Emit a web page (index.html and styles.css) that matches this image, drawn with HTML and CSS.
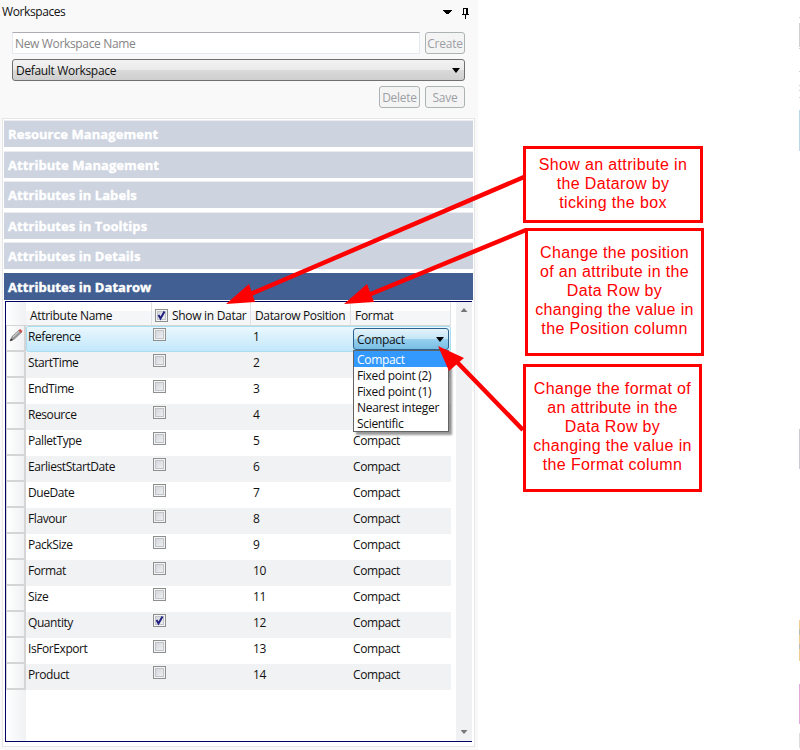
FILE: index.html
```html
<!DOCTYPE html>
<html lang="en">
<head>
<meta charset="utf-8">
<title>Workspaces</title>
<link rel="stylesheet" href="styles.css">
</head>
<body>
<main class="page">
  <section class="panel">
    <header class="titlebar">
      <span class="title">Workspaces</span>
      <svg class="title-icons" width="25" height="12" viewBox="0 0 25 12"><path d="M0 2h9v1H8v1H7v1H6v1H3V5H2V4H1V3H0z" fill="#000"/><path d="M20 0h5v6h1v1h-3v4h-1V7h-3V6h1zM21 1v5h2V1z" fill="#000" fill-rule="evenodd"/></svg>
    </header>
    <div class="form">
      <div class="line"><div class="input">New Workspace Name</div><div class="button">Create</div></div>
      <div class="select"><span>Default Workspace</span><i class="caret"></i></div>
      <div class="line actions"><div class="button delete">Delete</div><div class="button">Save</div></div>
    </div>
    <div class="accordion">
      <div class="bar b1"><span>Resource Management</span></div>
      <div class="bar b2"><span>Attribute Management</span></div>
      <div class="bar b3"><span>Attributes in Labels</span></div>
      <div class="bar b4"><span>Attributes in Tooltips</span></div>
      <div class="bar b5"><span>Attributes in Details</span></div>
      <div class="bar active"><span>Attributes in Datarow</span></div>
      <div class="datagrid">
        <div class="rows" id="rows">
          <div class="row head"><div class="rh"></div><div class="hc c-name">Attribute Name</div><div class="hc c-show"><i class="check on"></i><span>Show in Datar</span></div><div class="hc c-pos">Datarow Position</div><div class="hc c-format">Format</div></div>
        </div>
        <div class="scroll"><i class="up"></i><i class="down"></i></div>
      </div>
    </div>
  </section>
  <aside class="notes">
    <div class="note n1">Show an attribute in<br>the Datarow by<br>ticking the box</div>
    <div class="note n2">Change the position<br>of an attribute in the<br>Data Row by<br>changing the value in<br>the Position column</div>
    <div class="note n3">Change the format of<br>an attribute in the<br>Data Row by<br>changing the value in<br>the Format column</div>
  </aside>
  <div class="menu">
    <div class="opt sel">Compact</div><div class="opt">Fixed point (2)</div><div class="opt">Fixed point (1)</div><div class="opt">Nearest integer</div><div class="opt">Scientific</div>
  </div>
  <svg class="arrows" width="800" height="750" viewBox="0 0 800 750">
    <g stroke="#f00" stroke-width="4.5" fill="none"><path d="M524 177L246 296M526 230L366 296M523 430L456 361"/></g>
    <path d="M226 304L249 284L255 302ZM344 304L367 284L374 302ZM438 346L464 358L449 371Z" fill="#f00"/>
  </svg>
  <svg class="edge" width="1" height="750" viewBox="0 0 1 750"><path d="M0 17h1v1H0zM0 23h1v24H0zM0 48h1v1H0zM0 71h1v1H0zM0 85h1v1H0zM0 90h1v1H0zM0 97h1v1H0z" fill="#d0d0d0"/><path d="M0 110h1v41H0z" fill="#b9d9e6"/><path d="M0 429h1v40H0z" fill="#cbcbd6"/><path d="M0 620h1v41H0z" fill="#f2cf91"/><path d="M0 629h1v6H0zM0 644h1v5H0z" fill="#bbb"/><path d="M0 684h1v40H0z" fill="#e4a5dc"/><path d="M0 733h1v15H0z" fill="#ddd"/></svg>
</main>
<script src="grid.js"></script>
</body>
</html>
```
FILE: styles.css
```css
* { box-sizing: border-box; }
body { margin: 0; background: #fff; color: #111; font: 12px/16px "Open Sans", "Noto Sans", sans-serif; }
.page { position: relative; display: flex; width: 800px; height: 750px; overflow: hidden; }
i { display: block; flex: none; }

.panel { width: 478px; height: 750px; flex: none; background: #f9f9f9; }
.titlebar { display: flex; justify-content: space-between; height: 32px; padding: 4px 9px 0 2px; }
.title { letter-spacing: -.4px; }
.title-icons { margin-top: 4px; overflow: visible; margin-right: 1px; }
.form { display: flex; flex-direction: column; gap: 5px; height: 86px; padding: 0 13px 0 12px; }
.line { display: flex; gap: 5px; height: 22px; }
.actions { justify-content: flex-end; }
.input { width: 408px; height: 22px; padding: 3px 2px; background: #fff; border: 1px solid #e3e9ef; border-top-color: #abadb3; color: #858585; letter-spacing: -.34px; }
.button { width: 40px; height: 22px; padding-top: 3px; border: 1px solid #adb2b5; border-radius: 3px; background: #f4f4f4; color: #9c9fa4; text-align: center; white-space: nowrap; letter-spacing: -.25px; }
.delete { width: 41px; }
.select { display: flex; align-items: center; justify-content: space-between; height: 22px; flex: none; padding: 1px 4px 0 3px; border: 1px solid #707070; border-radius: 3px; background: linear-gradient(#f2f2f2, #ebebeb 48%, #dadada 50%, #cfcfcf); letter-spacing: -.33px; }
.caret { width: 8px; height: 5px; background: #000; clip-path: polygon(0 0, 100% 0, 50% 100%); }

.accordion { margin-left: 2px; width: 473px; height: 629px; padding: 1px; border: 1px solid #e6e6e6; background: #fff; }
.bar { width: 469px; height: 27px; margin: 0 0 4px; padding: 4px 4px 0; border-top: 1px solid #ececf0; background: #cdd3df; color: #fff; font-size: 13px; line-height: 18px; font-weight: 700; letter-spacing: .06px; -webkit-text-stroke: .4px #fff; }
.bar.b2, .bar.b4 { margin-bottom: 3px; }
.bar span { display: inline-block; white-space: nowrap; }
.bar.active { margin-bottom: 1px; background: #415f92; border-color: #415f92; }

.datagrid { display: flex; justify-content: space-between; width: 467px; height: 441px; margin-left: 1px; border: solid #000066; border-width: 1px 0 1px 1px; background: linear-gradient(90deg, #fff, #eff1f3 20px, #fff 20px); }
.rows { width: 445px; }
.row { display: flex; height: 26px; }
.row.head { height: 24px; }
.rh { width: 20px; flex: none; border: 1px solid #d5d5d5; border-width: 0 2px 2px 1px; background: linear-gradient(90deg, #fff, #eff1f3); }
.head .rh { border: 0; border-bottom: 1px solid #d5d5d5; }
.row:not(.head) { background: #fff; }
.row.alt { background: #f1f2f4; }
.row.current .cells { background: linear-gradient(#eaf7fe, #c2e8fb); border: 1px solid #a9ddf0; border-radius: 2px; }
.hc { display: flex; align-items: center; flex: none; height: 24px; padding: 5px 0 0 4px; overflow: hidden; white-space: nowrap; border-right: 1px solid #dfe1e4; border-bottom: 1px solid #d5d5d5; background: linear-gradient(#fff 38%, #f5f6f7 39%); letter-spacing: -.3px; }
.hc.c-name { width: 126px; }
.hc.c-show { width: 99px; padding: 3px 3px 0 3px; gap: 4px; letter-spacing: -.3px; }
.hc.c-show span { padding-top: 2px; }
.hc.c-pos { width: 100px; letter-spacing: -.36px; }
.hc.c-format { width: 100px; }
.cells { display: grid; grid-template-columns: 126px 99px 100px 100px; width: 425px; height: 26px; letter-spacing: -.42px; }
.cells > * { padding: 3px 0 0 2px; white-space: nowrap; }
.cells .mark { padding: 2px 0 0 1px; }
.current .cells > * { margin-left: -1px; margin-top: -1px; }
.check { width: 13px; height: 13px; border: 1px solid #8e8f8f; background: linear-gradient(135deg, #cbcfd5, #f6f6f6); box-shadow: inset 0 0 0 1px #f4f4f4, inset 0 0 0 2px #c0c4c9; }
.check svg { display: block; }
.pencil { display: block; margin: 2px 0 0 2px; }
.scroll { display: flex; flex-direction: column; justify-content: space-between; align-items: center; width: 16px; padding: 6px 0 7px; background: #f0f1f3; }
.up, .down { width: 7px; height: 4px; background: #777; }
.up { clip-path: polygon(50% 0, 100% 100%, 0 100%); }
.down { clip-path: polygon(0 0, 100% 0, 50% 100%); }
.current .cells .combo { display: flex; align-items: center; justify-content: space-between; width: 96px; height: 22px; margin: 1px 0 0 1px; padding: 1px 4px 0 3px; border: 1px solid #2c628b; border-radius: 3px; background: linear-gradient(#e5f4fc, #c4e5f6 49%, #98d1ef 50%, #78bde4); letter-spacing: -.32px; }

.notes { width: 182px; padding-top: 146px; margin-left: 45px; }
.note { display: flex; align-items: center; justify-content: center; border: 3px solid #f00; background: #fff; color: #f00; font: 16px/19px "Liberation Sans", Arial, sans-serif; letter-spacing: .35px; text-align: center; white-space: nowrap; }
.n1 { width: 180px; height: 77px; padding-bottom: 2px; }
.n2 { width: 179px; height: 128px; margin: 5px 0 8px 2px; padding-bottom: 3px; }
.n3 { width: 179px; height: 128px; padding-bottom: 3px; }

.menu { position: absolute; left: 353px; top: 350px; width: 96px; height: 82px; border: 1px solid #646464; background: #fff; box-shadow: 3px 3px 2px rgba(0,0,0,.4); }
.opt { height: 16px; padding: 1px 0 0 3px; line-height: 16px; white-space: nowrap; letter-spacing: -.32px; }
.opt.sel { background: #3399ff; color: #fff; }
.arrows { position: absolute; left: 0; top: 0; }
.edge { position: absolute; right: 0; top: 0; }
```
FILE: grid.js
```js
const names = ["Reference", "StartTime", "EndTime", "Resource", "PalletType", "EarliestStartDate", "DueDate", "Flavour", "PackSize", "Format", "Size", "Quantity", "IsForExport", "Product"];
const tick = '<svg width="11" height="11" viewBox="0 0 11 11"><path d="M2.5 5L4.5 8.5L8.5 1.5" fill="none" stroke="#212080" stroke-width="2"/></svg>';
const pencil = '<svg class="pencil" width="15" height="15" viewBox="0 0 15 15"><path d="M1 13L3 8.5L10 2L12.5 4.5L5 11.5Z" fill="#999" stroke="#777" stroke-width=".5"/><path d="M4 9L10 3.5" stroke="#ddd"/><path d="M1 13L2 10.5L4 12Z" fill="#222"/><path d="M9.5 2.5L11 1L13.500 3L12 5Z" fill="#d34b4b"/></svg>';
// The open format menu lies over the format cells of rows 1 to 3.
const format = i => i === 0 ? '<div class="combo"><span>Compact</span><i class="caret"></i></div>' : i < 4 ? "<div></div>" : "<div>Compact</div>";
document.getElementById("rows").insertAdjacentHTML("beforeend", names.map((name, i) => `
<div class="row${i % 2 ? " alt" : ""}${i === 0 ? " current" : ""}">
<div class="rh">${i === 0 ? pencil : ""}</div>
<div class="cells"><div>${name}</div><div class="mark"><i class="check">${name === "Quantity" ? tick : ""}</i></div><div>${i + 1}</div>
${format(i)}</div>
</div>`).join(""));
document.querySelector(".check.on").innerHTML = tick;
```
